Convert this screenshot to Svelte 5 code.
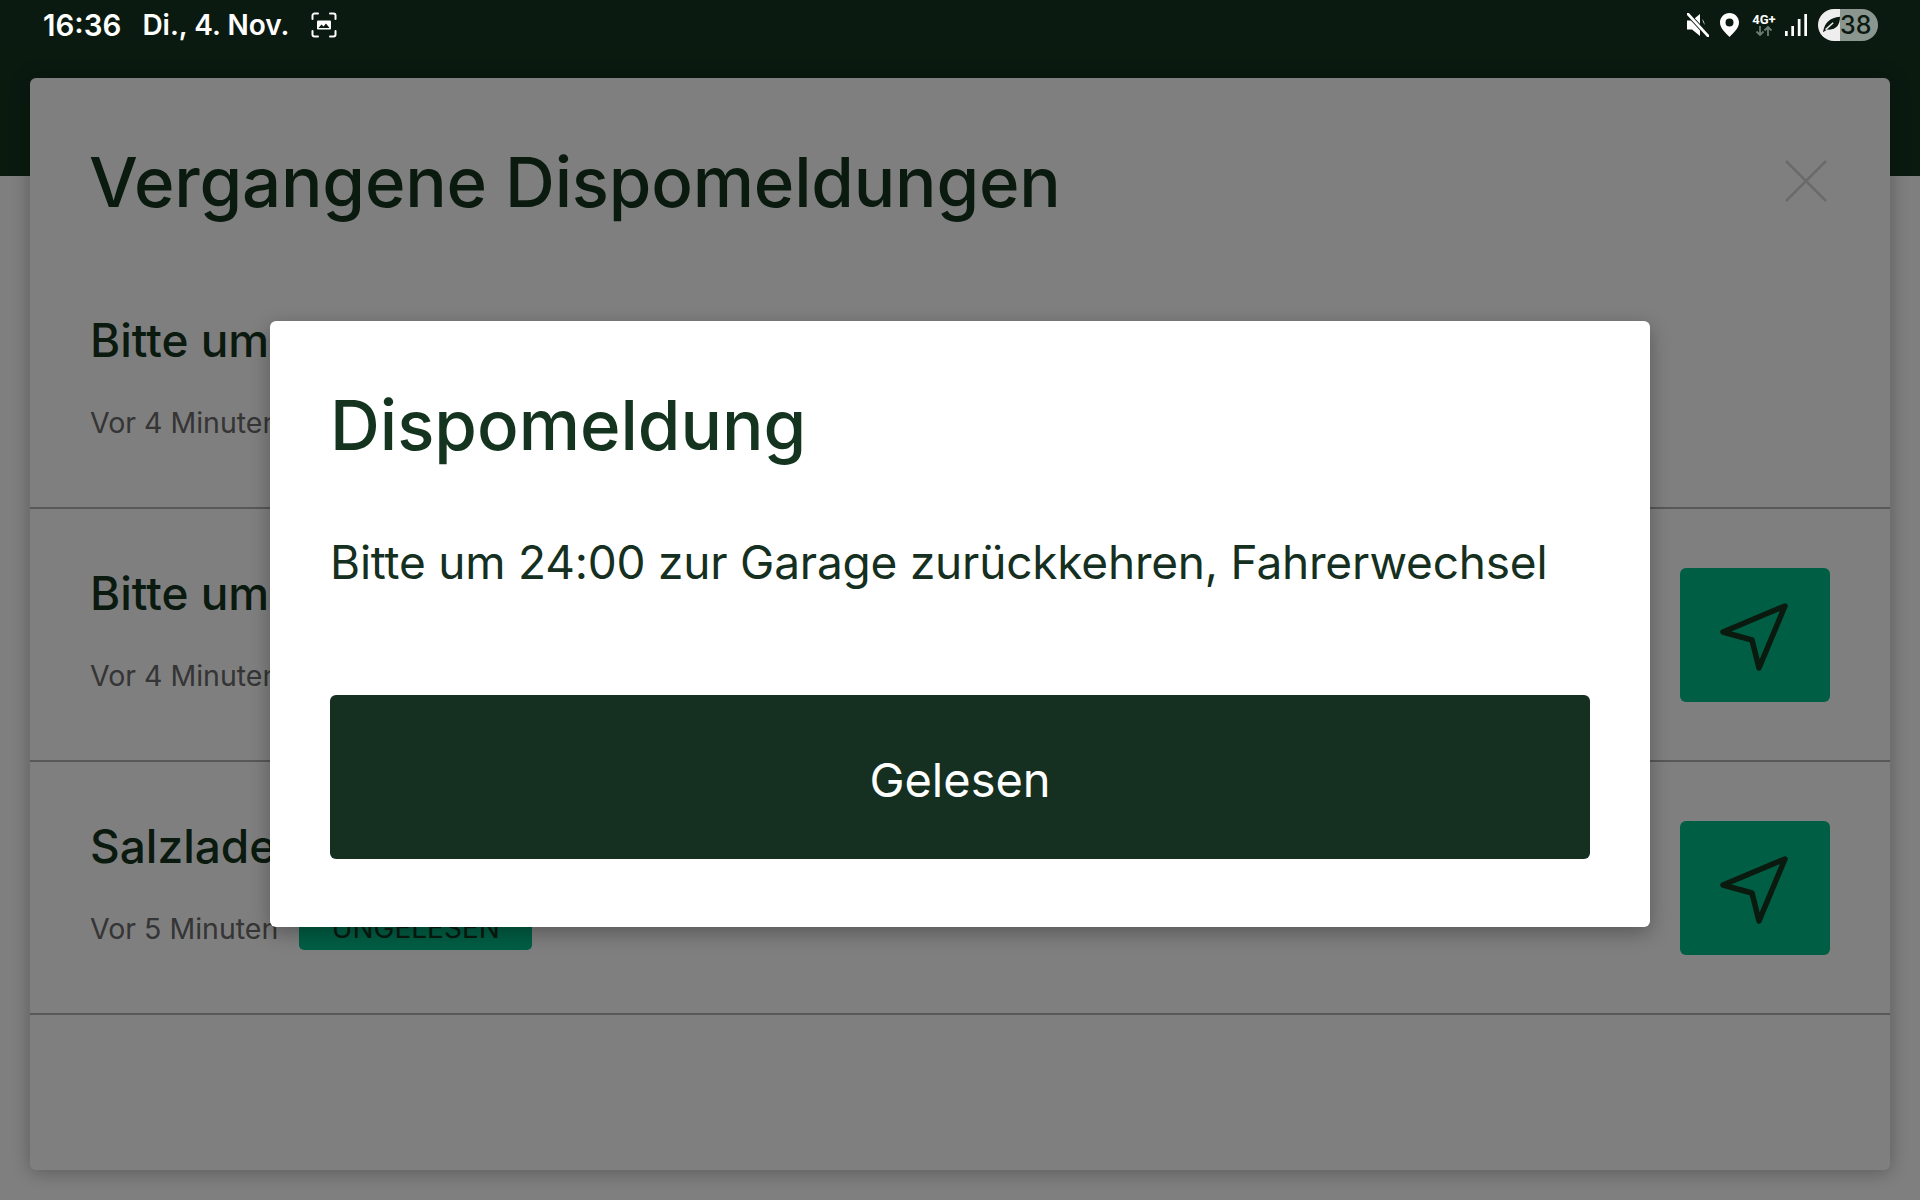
<script>
	const rows = [
		{ title: 'Bitte um 24:00 zur Garage zurückkehren', time: 'Vor 4 Minuten', nav: false },
		{ title: 'Bitte um 24:00 zur Garage zurückkehren', time: 'Vor 4 Minuten', nav: true },
		{ title: 'Salzladen bitte abholen', time: 'Vor 5 Minuten', nav: true }
	];
</script>

<div class="page">
	<div class="status">
		<div class="status-left">
			<span class="clock">16:36</span>
			<span class="date">Di., 4. Nov.</span>
			<svg class="shot" width="26" height="26" viewBox="0 0 26 26" fill="none">
				<path d="M1.5 7V3.5a2 2 0 0 1 2-2H7M19 1.500h3.500a2 2 0 0 1 2 2V7M24.500 19v3.500a2 2 0 0 1-2 2H19M7 24.500H3.500a2 2 0 0 1-2-2V19" stroke="#fff" stroke-width="2" stroke-linecap="round"/>
				<path d="M7 8.500h12a1 1 0 0 1 1 1v7a1 1 0 0 1-1 1H7a1 1 0 0 1-1-1v-7a1 1 0 0 1 1-1z" fill="#fff"/>
				<path d="M7.500 16l3-3.500 2 2 2.500-3 3.500 4.500z" fill="#0a1a10"/>
			</svg>
		</div>
		<div class="status-right">
			<svg width="22" height="24" viewBox="0 0 22 24">
				<path d="M0 7.500h5L13 1v22l-8-6.500H0zM15 6c2 2 2.500 4 2.500 6" fill="#fff"/>
				<path d="M0 0l22 24" stroke="#0a1a10" stroke-width="4.500"/>
				<path d="M0 0l22 24" stroke="#fff" stroke-width="2.800"/>
			</svg>
			<svg class="pin" width="19" height="24" viewBox="0 0 19 24">
				<path d="M9.500 0C4.300 0 0 4.200 0 9.500 0 15.500 6 20 9.500 24 13 20 19 15.500 19 9.500 19 4.200 14.700 0 9.500 0zm0 13.500a4 4 0 1 1 0-8 4 4 0 0 1 0 8z" fill="#fff"/>
			</svg>
			<div class="net">
				<span>4G+</span>
				<svg width="18" height="10" viewBox="0 0 18 10" fill="none" stroke="#6f7a73" stroke-width="1.800">
					<path d="M5 0v9M1.500 5.500L5 9l3.500-3.500M13 10V1M9.500 4.500L13 1l3.500 3.500"/>
				</svg>
			</div>
			<svg class="bars" width="22" height="22" viewBox="0 0 22 22" fill="#fff">
				<rect x="0" y="17" width="2.700" height="5"/>
				<rect x="6.300" y="12" width="2.700" height="10"/>
				<rect x="12.800" y="5" width="2.700" height="17"/>
				<rect x="19.300" y="0" width="2.700" height="22"/>
			</svg>
			<div class="battery">
				<svg width="17" height="17" viewBox="0 0 20 20">
					<path d="M0 19C2 8 8 2 20 1c0 10-5 16-15 15z" fill="#0a1a10"/>
					<path d="M3 16l9-8" stroke="#eee" stroke-width="1.800"/>
				</svg>
				<span>38</span>
			</div>
		</div>
	</div>
	<div class="header"></div>

	<section class="panel">
		<div class="panel-head">
			<h1>Vergangene Dispomeldungen</h1>
			<svg class="close" width="42" height="42" viewBox="0 0 42 42" stroke="#d4d4d4" stroke-width="2.500" fill="none">
				<path d="M1 1l40 40M41 1L1 41"/>
			</svg>
		</div>
		{#each rows as row}
			<div class="row">
				<div class="row-text">
					<h2>{row.title}</h2>
					<div class="meta">
						<span class="time">{row.time}</span>
						<span class="badge">UNGELESEN</span>
					</div>
				</div>
				{#if row.nav}
					<button class="nav">
						<svg width="72" height="72" viewBox="0 0 72 72" fill="none" stroke="#14341f" stroke-width="5.500" stroke-linejoin="round">
							<path d="M66 7L4 33l29 8 7 28z"/>
						</svg>
					</button>
				{/if}
			</div>
		{/each}
	</section>

	<div class="scrim">
		<div class="modal">
			<h3>Dispomeldung</h3>
			<p>Bitte um 24:00 zur Garage zurückkehren, Fahrerwechsel</p>
			<button class="read">Gelesen</button>
		</div>
	</div>
</div>

<style>
	:global(body) {
		margin: 0;
		background: #fff;
	}

	.page {
		position: relative;
		height: 1200px;
		overflow: hidden;
		font-family: Inter, "Noto Sans", sans-serif;
		color: #152f20;
	}

	.status {
		position: relative;
		z-index: 2;
		height: 48px;
		box-sizing: border-box;
		padding: 1px 42px 0 43px;
		display: flex;
		justify-content: space-between;
		align-items: center;
		background: #0a1a10;
		color: #fff;
	}

	.status-left {
		display: flex;
		align-items: center;
		font-size: 28px;
		font-weight: 600;
	}

	.clock {
		font-size: 29.500px;
	}

	.date {
		margin-left: 21px;
		font-size: 28px;
	}

	.shot {
		margin-left: 22px;
	}

	.status-right {
		display: flex;
		align-items: center;
	}

	.pin {
		margin-left: 11px;
	}

	.net {
		margin-left: 13px;
		width: 24px;
		display: flex;
		flex-direction: column;
		align-items: center;
		font-family: Roboto, sans-serif;
		font-size: 13px;
		font-weight: 700;
		line-height: 13px;
	}

	.bars {
		margin-left: 9px;
	}

	.battery {
		margin-left: 11px;
		width: 60px;
		height: 32px;
		border-radius: 16px;
		display: flex;
		align-items: center;
		padding-left: 5px;
		box-sizing: border-box;
		background: linear-gradient(90deg, #eee 22px, #8c9690 22px);
		color: #0a1a10;
		font-size: 25px;
		font-weight: 500;
	}

	.header {
		height: 128px;
		background: #14341f;
	}

	.panel {
		margin: -98px 30px 0;
		height: 1092px;
		background: #fff;
		border-radius: 6px;
		box-shadow: 0 2px 20px rgba(0, 0, 0, 0.3);
	}

	.panel-head {
		height: 178px;
		box-sizing: border-box;
		padding: 30px 63px 0 60px;
		display: flex;
		justify-content: space-between;
		align-items: center;
	}

	h1 {
		margin: 0 0 0 -1px;
		font-size: 69px;
		font-weight: 500;
		letter-spacing: -0.200px;
		color: #14341f;
	}

	.close {
		margin-top: -3px;
	}

	.row {
		height: 253px;
		box-sizing: border-box;
		border-bottom: 2px solid #b0b0b0;
		padding: 0 60px 7px;
		display: flex;
		justify-content: space-between;
		align-items: center;
	}

	h2 {
		margin: 0 0 32px;
		font-size: 46px;
		font-weight: 500;
		white-space: nowrap;
		color: #14341f;
	}

	.meta {
		display: flex;
		align-items: center;
		gap: 21px;
	}

	.time {
		font-size: 28.500px;
		color: #6a6a6a;
	}

	.badge {
		width: 233px;
		height: 44px;
		line-height: 44px;
		text-align: center;
		border-radius: 5px;
		background: #00bd88;
		font-size: 28px;
		color: #14341f;
	}

	.nav {
		width: 150px;
		height: 134px;
		margin-top: 7px;
		border: none;
		padding: 0;
		border-radius: 6px;
		background: #00bd88;
		display: flex;
		align-items: center;
		justify-content: center;
	}

	.scrim {
		position: absolute;
		inset: 48px 0 0;
		z-index: 1;
		background: rgba(0, 0, 0, 0.5);
		display: flex;
		align-items: center;
		justify-content: center;
	}

	.modal {
		width: 1380px;
		height: 606px;
		box-sizing: border-box;
		padding: 60px;
		background: #fff;
		border-radius: 6px;
		box-shadow: 0 6px 20px rgba(0, 0, 0, 0.3);
		display: flex;
		flex-direction: column;
	}

	h3 {
		margin: 0;
		font-size: 69px;
		font-weight: 500;
		line-height: 88px;
		color: #14341f;
	}

	p {
		margin: 63px 0 0;
		font-size: 46px;
		letter-spacing: -0.210px;
		line-height: 60px;
	}

	.read {
		margin-top: auto;
		margin-bottom: 8px;
		height: 164px;
		padding: 5px 0 0;
		border: none;
		border-radius: 6px;
		background: #152f20;
		color: #fff;
		font: 400 47px Inter, sans-serif;
	}
</style>
